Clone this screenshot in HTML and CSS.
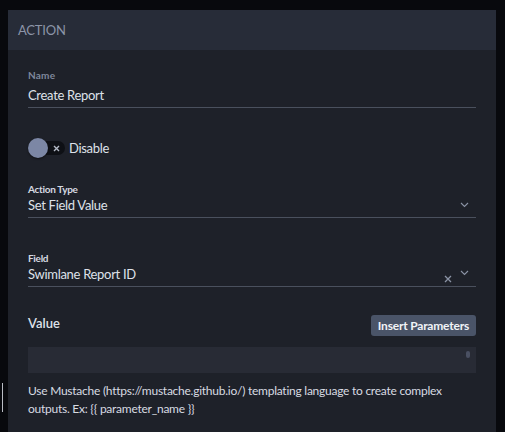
FILE: index.html
```html
<!DOCTYPE html>
<html>
<head>
<meta charset="utf-8">
<link rel="stylesheet" href="styles.css">
</head>
<body>
<div class="edge-mark"></div>
<section class="panel">
  <header class="panel-head">ACTION</header>
  <div class="panel-body">
    <div class="field field-name">
      <div class="label label-muted">Name</div>
      <div class="input input-tall"><span class="val">Create Report</span></div>
    </div>

    <div class="toggle-row">
      <div class="toggle">
        <span class="track">
          <svg class="x" width="7" height="7" viewBox="0 0 7 7"><path d="M1 1 L6 6 M6 1 L1 6" fill="none" stroke="#b3b9c6" stroke-width="1.4"/></svg>
        </span>
        <span class="knob"></span>
      </div>
      <span class="toggle-label">Disable</span>
    </div>

    <div class="field field-type">
      <div class="label">Action Type</div>
      <div class="input">
        <span class="val">Set Field Value</span>
        <span class="icons">
          <svg class="chev" width="9" height="6" viewBox="0 0 9 6"><path d="M1 1 L4.5 4.5 L8 1" fill="none" stroke="#8b93a5" stroke-width="1.1"/></svg>
        </span>
      </div>
    </div>

    <div class="field field-field">
      <div class="label">Field</div>
      <div class="input">
        <span class="val">Swimlane Report ID</span>
        <span class="icons">
          <svg class="clear" width="8" height="8" viewBox="0 0 8 8"><path d="M1 1 L7 7 M7 1 L1 7" fill="none" stroke="#8b93a5" stroke-width="1.3"/></svg>
          <svg class="chev chev-up" width="9" height="6" viewBox="0 0 9 6"><path d="M1 1 L4.5 4.5 L8 1" fill="none" stroke="#8b93a5" stroke-width="1.1"/></svg>
        </span>
      </div>
    </div>

    <div class="value-head">
      <span class="value-label">Value</span>
      <button class="btn">Insert Parameters</button>
    </div>
    <div class="textarea"><span class="thumb"></span></div>
    <p class="help">Use Mustache (https://mustache.github.io/) templating language to create complex outputs. Ex: {{ parameter_name }}</p>
  </div>
</section>
</body>
</html>
```

FILE: styles.css
```css
html, body {
  margin: 0;
  padding: 0;
  background: #08090d;
  height: 100%;
  overflow: hidden;
}
body {
  padding: 10px 9px 0 8px;
  box-sizing: border-box;
  font-family: "Lato", "Open Sans", sans-serif;
  color: #dde0e7;
}
.edge-mark {
  position: absolute;
  left: 2px;
  top: 383px;
  width: 1px;
  height: 29px;
  background: #b9bcc4;
}
.panel {
  background: #1e2129;
  height: 100%;
}
.panel-head {
  height: 40px;
  background: #272c38;
  display: flex;
  align-items: center;
  padding-left: 10px;
  font-size: 13px;
  color: #8c95a8;
  letter-spacing: -0.2px;
}
.panel-body {
  padding: 19px 20px 0 20px;
}
.field {
  display: flex;
  flex-direction: column;
}
.label {
  font-size: 10px;
  font-weight: 700;
  color: #d5d9e1;
  line-height: 13px;
  letter-spacing: -0.3px;
}
.label-muted {
  color: #7f889c;
  letter-spacing: 0.2px;
}
.input {
  display: flex;
  align-items: flex-end;
  justify-content: space-between;
  height: 22px;
  box-sizing: border-box;
  padding-bottom: 4px;
  border-bottom: 1px solid #4a505d;
  font-size: 13px;
  line-height: 16px;
  color: #dfe2e9;
}
.input-tall {
  height: 26px;
}
.val {
  letter-spacing: -0.3px;
}
.icons {
  display: flex;
  align-items: center;
  gap: 8px;
  padding-right: 7px;
  height: 16px;
}
.clear {
  margin-top: 9px;
}
.chev-up {
  margin-top: -3px;
}
.toggle-row {
  display: flex;
  align-items: center;
  margin-top: 28px;
  height: 24px;
}
.toggle {
  position: relative;
  width: 37px;
  height: 20px;
}
.track {
  position: absolute;
  left: 10px;
  top: 3px;
  width: 27px;
  height: 14px;
  border-radius: 7px;
  background: #0e1015;
  display: flex;
  align-items: center;
  justify-content: flex-end;
}
.x {
  margin-right: 5px;
}
.knob {
  position: absolute;
  left: 0;
  top: 0;
  width: 20px;
  height: 20px;
  border-radius: 50%;
  background: #7c87a5;
  box-shadow: 0 1px 2px rgba(0,0,0,0.5);
}
.toggle-label {
  margin-left: 4px;
  font-size: 13px;
  color: #dfe2e9;
  letter-spacing: -0.3px;
}
.field-type {
  margin-top: 23px;
}
.field-field {
  margin-top: 34px;
}
.value-head {
  display: flex;
  justify-content: space-between;
  align-items: flex-start;
  margin-top: 28px;
}
.value-label {
  font-size: 13px;
  line-height: 16px;
  font-weight: 600;
  color: #dfe2e9;
  margin-top: 0;
}
.btn {
  background: #4a5468;
  border: none;
  border-radius: 3px;
  color: #f1f3f7;
  font-family: inherit;
  font-size: 12px;
  font-weight: 700;
  height: 21px;
  padding: 0 7px;
  letter-spacing: -0.2px;
}
.textarea {
  position: relative;
  margin-top: 11px;
  height: 26px;
  background: #282b35;
}
.thumb {
  position: absolute;
  right: 6px;
  top: 4px;
  width: 4px;
  height: 7px;
  border-radius: 2px;
  background: #4a5062;
}
.help {
  margin: 9px 0 0 0;
  font-size: 12px;
  line-height: 18px;
  color: #d8dbe2;
  letter-spacing: -0.25px;
}
```
